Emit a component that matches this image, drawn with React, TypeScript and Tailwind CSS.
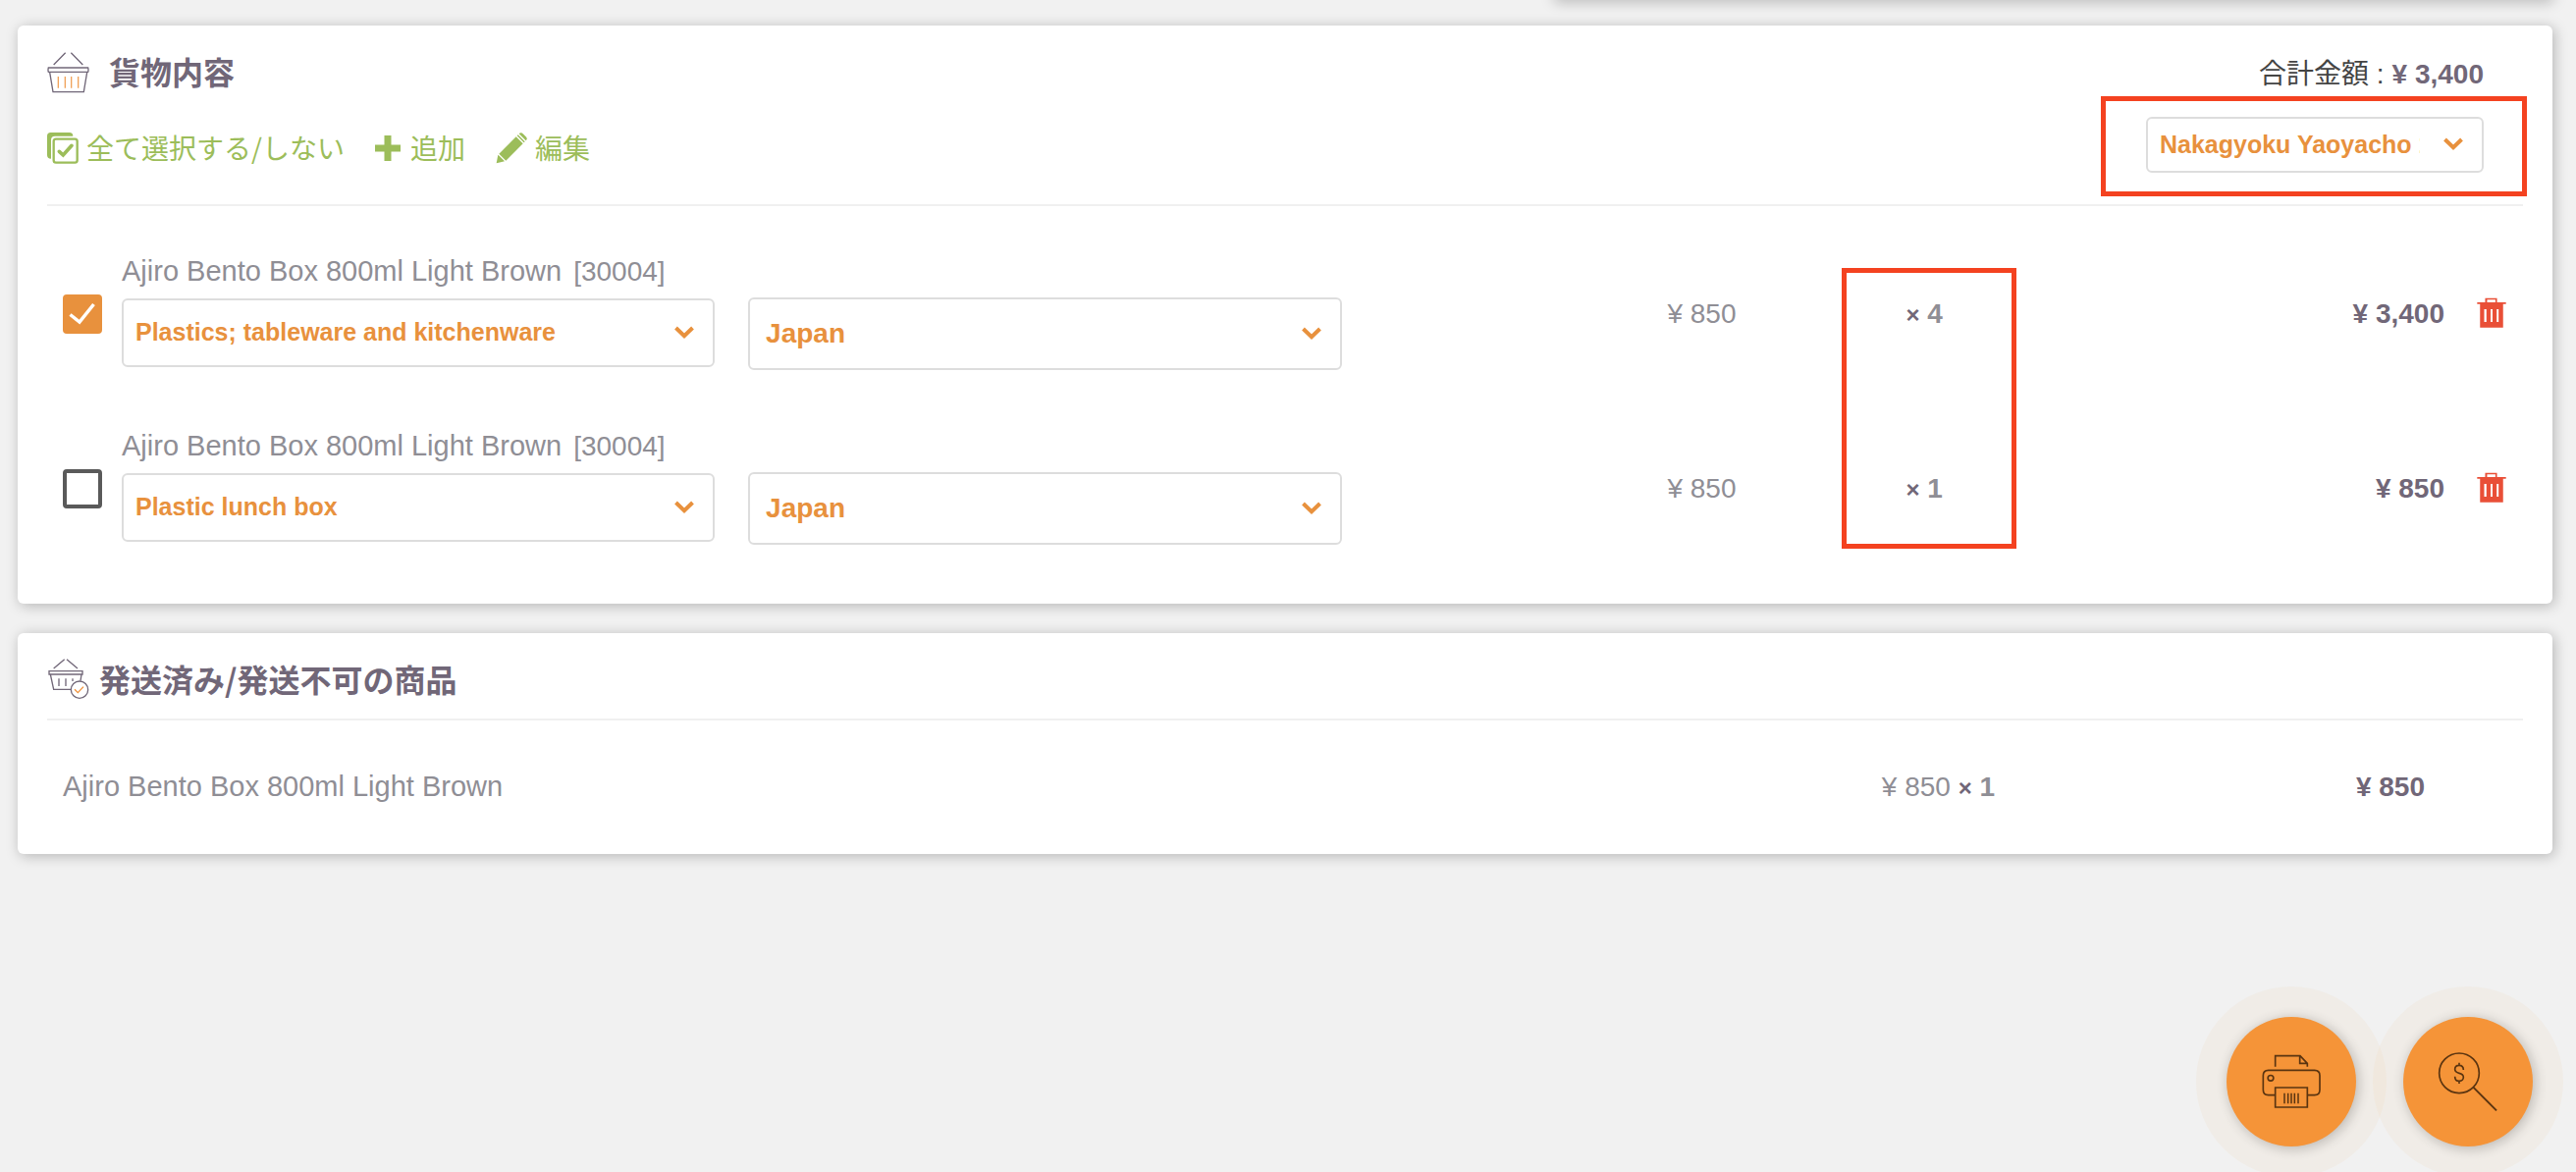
import React from "react";

type SelectFieldProps = {
  label: string;
  options: string[];
  className: string;
};

function Chevron() {
  return (
    <svg viewBox="0 0 20 13" className="h-[13px] w-5" fill="none" stroke="currentColor" strokeWidth="4" aria-hidden="true">
      <path d="M1.5 2 10 10.2 18.5 2" />
    </svg>
  );
}

function SelectField({ label, options, className }: SelectFieldProps) {
  return (
    <div className="relative text-[#e8913d]">
      <select
        aria-label={label}
        className={
          "block w-full appearance-none truncate rounded-md border-2 border-[#dddddd] bg-white font-bold text-clip outline-none " +
          className
        }
      >
        {options.map((option) => (
          <option key={option}>{option}</option>
        ))}
      </select>
      <span className="pointer-events-none absolute inset-y-0 right-[21px] flex items-center pb-0.5">
        <Chevron />
      </span>
    </div>
  );
}

function BasketIcon() {
  return (
    <svg viewBox="24 36 132 132" className="size-11 shrink-0" fill="none" stroke="#716778" strokeWidth="4" aria-hidden="true">
      <path d="M44 78 80 41M97 41l36 37" />
      <path d="M28 87h121q2 7 0 13H28q-2-6 0-13z" />
      <path d="M32 101l10 60h94l10-60" />
      <path d="M58 114v35M79 114v35M98 114v35M119 114v35" stroke="#f0a25a" />
    </svg>
  );
}

function BasketDoneIcon() {
  return (
    <svg viewBox="24 36 132 132" className="size-11 shrink-0" fill="none" stroke="#716778" strokeWidth="4" aria-hidden="true">
      <path d="M44 66 77 38M84 38l33 28" />
      <path d="M30 74h102v10H30z" />
      <path d="M34 84l10 46h53M129 84l-3 20" />
      <path d="M60 97v23M81 97v23M102 97v8" />
      <circle cx="123" cy="131" r="26" />
      <path d="M108 130l10 10 17-18" stroke="#f0913a" />
    </svg>
  );
}

function SelectAllIcon() {
  return (
    <svg viewBox="24 30 96 96" className="size-8 shrink-0" fill="none" aria-hidden="true">
      <path d="M24 41q0-11 11-11h57q11 0 11 11H48q-12 0-12 12v57q-12 0-12-11z" fill="currentColor" />
      <rect x="44" y="50" width="72" height="72" rx="7" stroke="currentColor" strokeWidth="7" />
      <path d="M61 88l12 11 26-29" stroke="currentColor" strokeWidth="11" strokeLinecap="round" />
    </svg>
  );
}

function PlusIcon() {
  return (
    <svg viewBox="0 0 26 26" className="size-[26px] shrink-0" fill="currentColor" aria-hidden="true">
      <path d="M9.500 0h7v9.500H26v7h-9.500V26h-7v-9.500H0v-7h9.500z" />
    </svg>
  );
}

function PencilIcon() {
  return (
    <svg viewBox="405 30 96 96" className="size-8 shrink-0" fill="currentColor" aria-hidden="true">
      <path d="M415 95 467 43l21 21-52 52z" />
      <path d="M412 98l20 20-25 6z" />
      <path d="M470 40l3-3 21 21-3 3z" />
      <path d="M476 34q6-6 12 0l9 9q6 6 0 12z" />
    </svg>
  );
}

function TrashIcon() {
  return (
    <svg viewBox="38 36 92 93" className="h-[31px] w-[30px]" fill="#e94f37" aria-hidden="true">
      <path
        d="M64 50V37h37v13h28v6h-9v73H48V56h-9v-6zm6 0h26v-8H70zM61 72v40h7V72zm20 0v40h6V72zm19 0v40h6V72z"
        fillRule="evenodd"
      />
    </svg>
  );
}

const items = [
  { category: "Plastics; tableware and kitchenware", quantity: 4, total: "¥ 3,400", checked: true },
  { category: "Plastic lunch box", quantity: 1, total: "¥ 850", checked: false },
];

const card = "rounded-md bg-white shadow-[2px_2px_14px_rgba(0,0,0,0.25)]";
const japanese = "font-['Noto_Sans_CJK_JP',sans-serif]";

function Times() {
  return <span className="text-2xl font-bold text-[#716778]">×</span>;
}

function CargoCard() {
  return (
    <section className={card + " px-[30px] pb-7"}>
      <header className="flex justify-between border-b-2 border-[#f0f0f0] pt-[26px] pb-8">
        <div>
          <h2 className={japanese + " flex h-11 items-center gap-[19px] text-[32px] font-bold text-[#716778]"}>
            <BasketIcon />
            <span className="pb-1">貨物内容</span>
          </h2>
          <div className={japanese + " mt-[39px] flex h-8 items-center gap-[31px] text-[28px] text-[#9cbd5a]"}>
            <button type="button" className="flex items-center gap-2">
              <SelectAllIcon />
              <span className="pb-0.5">全て選択する/しない</span>
            </button>
            <button type="button" className="flex items-center gap-2.5">
              <PlusIcon />
              <span className="pb-0.5">追加</span>
            </button>
            <button type="button" className="flex items-center gap-2">
              <PencilIcon />
              <span className="pb-0.5">編集</span>
            </button>
          </div>
        </div>
        <div className="flex flex-col items-end pr-10">
          <p className="flex h-12 items-center gap-2 text-[28px] text-[#444444]">
            <span>合計金額 :</span>
            <strong className="text-[#716778]">¥ 3,400</strong>
          </p>
          <div className="relative mt-[19px] w-[344px]">
            <SelectField
              label="発送先"
              options={["Nakagyoku Yaoyacho 1"]}
              className="h-[57px] pr-[63px] pl-3 text-[25px]"
            />
            <span className="pointer-events-none absolute -top-[21px] -right-[44px] -bottom-6 -left-[46px] border-[5px] border-[#f44220]" />
          </div>
        </div>
      </header>
      <table className="mt-[21px] w-full table-fixed text-[28px] text-[#8f8e95]">
        <colgroup>
          <col className="w-[76px]" />
          <col className="w-[25.3%]" />
          <col className="w-[24%]" />
          <col className="w-[20.15%]" />
          <col className="w-[178px]" />
          <col />
          <col className="w-20" />
        </colgroup>
        <tbody>
          {items.map((item, index) => (
            <tr key={item.category} className="h-[178px]">
              <td className="pl-4">
                <div className="relative size-10">
                  <input
                    type="checkbox"
                    defaultChecked={item.checked}
                    aria-label={item.category}
                    className="peer block size-10 appearance-none rounded-sm border-4 border-[#5a5a5a] checked:border-[#e8913d] checked:bg-[#e8913d]"
                  />
                  <svg
                    viewBox="0 0 40 40"
                    className="pointer-events-none absolute inset-0 hidden size-10 peer-checked:block"
                    fill="none"
                    stroke="#fff"
                    strokeWidth="3.5"
                    aria-hidden="true"
                  >
                    <path d="M7.500 20.500 17 28 31.500 10" />
                  </svg>
                </div>
              </td>
              <td className="pt-7 pr-[34px] align-top">
                <p className="mb-[9px] flex h-9 items-center gap-3 text-[29px] whitespace-nowrap">
                  <span>Ajiro Bento Box 800ml Light Brown</span>
                  <span className="text-[28px]">[30004]</span>
                </p>
                <SelectField
                  label="品目"
                  options={[item.category]}
                  className="h-[70px] pr-14 pl-3 text-[25px]"
                />
              </td>
              <td className="pt-[72px] align-top">
                <SelectField
                  label="原産国"
                  options={["Japan"]}
                  className="h-[74px] pr-14 pl-4 text-[28px]"
                />
              </td>
              <td className="pr-[107px] text-right">¥ 850</td>
              <td className="relative pl-[66px] font-bold">
                <Times /> {item.quantity}
                {index === 0 && (
                  <span className="pointer-events-none absolute inset-x-0 top-[42px] h-[286px] border-[5px] border-[#f44220]" />
                )}
              </td>
              <td className="text-right font-bold text-[#716778]">{item.total}</td>
              <td className="pb-1 pl-[33px]">
                <button type="button" aria-label="削除" className="block">
                  <TrashIcon />
                </button>
              </td>
            </tr>
          ))}
        </tbody>
      </table>
    </section>
  );
}

function ShippedCard() {
  return (
    <section className={card + " px-[30px]"}>
      <h2
        className={
          japanese +
          " flex h-[89px] items-center gap-[9px] border-b-2 border-[#f0f0f0] pt-2 text-[32px] font-bold text-[#716778]"
        }
      >
        <BasketDoneIcon />
        <span className="pb-1">発送済み/発送不可の商品</span>
      </h2>
      <table className="w-full table-fixed text-[28px] text-[#8f8e95]">
        <colgroup>
          <col className="w-[74.1%]" />
          <col className="w-[14%]" />
          <col />
        </colgroup>
        <tbody>
          <tr className="h-[136px]">
            <td className="pl-4 text-[29px]">Ajiro Bento Box 800ml Light Brown</td>
            <td>
              ¥ 850 <Times /> <strong>1</strong>
            </td>
            <td className="pr-[100px] text-right font-bold text-[#716778]">¥ 850</td>
          </tr>
        </tbody>
      </table>
    </section>
  );
}

const fab =
  "block size-[132px] rounded-full bg-[#f59438] shadow-[2px_2px_14px_rgba(0,0,0,0.25)] outline-[31px] outline-[#f59438]/5";

function FloatingActions() {
  return (
    <div className="fixed right-11 bottom-[26px] flex gap-12">
      <button type="button" aria-label="印刷" className={fab}>
        <svg viewBox="204 168 396 396" className="size-full" fill="none" stroke="#5a3410" strokeWidth="5" aria-hidden="true">
          <path d="M353 320v-33h76l22 23v10M428 288v22h22" />
          <path d="M352 407h-20q-16 0-16-16v-44q0-16 16-16h141q16 0 16 16v44q0 16-16 16h-20" />
          <circle cx="339" cy="355" r="8.500" />
          <path d="M353 384h98v60h-98z" />
          <path d="M381 401v32M392 401v32M402 401v32M412 401v32M423 401v32" strokeWidth="4.500" />
        </svg>
      </button>
      <button type="button" aria-label="料金検索" className={fab}>
        <svg viewBox="744 168 396 396" className="size-full" fill="none" stroke="#5a3410" strokeWidth="5" aria-hidden="true">
          <circle cx="915" cy="340" r="61" />
          <path d="M958 383l71 71" strokeWidth="6" />
          <path d="M928 330q0-14-13-14t-13 12q0 9 13 12t13 12q0 12-13 12t-13-14M915 308v8M915 364v8" />
        </svg>
      </button>
    </div>
  );
}

export default function App() {
  return (
    <main className="min-h-screen overflow-hidden bg-[#f1f1f1] pr-6 pb-10 pl-[18px] font-['Liberation_Sans','Noto_Sans_CJK_JP',sans-serif]">
      <div className={card + " -mt-3 ml-auto h-3 w-[39.5%]"} />
      <div className="mt-[26px] flex flex-col gap-[30px]">
        <CargoCard />
        <ShippedCard />
      </div>
      <FloatingActions />
    </main>
  );
}
